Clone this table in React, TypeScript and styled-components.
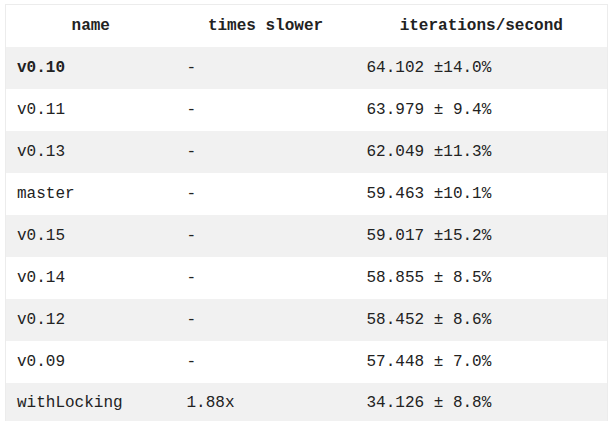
import React from "react";
import styled, { createGlobalStyle } from "styled-components";

const Global = createGlobalStyle`
  html, body { margin: 0; padding: 0; background: #fff; }
  body { font-family: "Liberation Mono", monospace; color: #222; }
`;

const Page = styled.div`
  padding: 4px 6px 0 5px;
`;

const Table = styled.table`
  border-collapse: collapse;
  width: 602px;
  border: 1px solid #ececec;
  font-family: "Liberation Mono", monospace;
  font-size: 16px;
  table-layout: fixed;
`;

const Col = styled.col<{ $w: number }>`
  width: ${(p) => p.$w}px;
`;

const Th = styled.th`
  box-sizing: border-box;
  height: 42px;
  padding: 0 11px;
  text-align: center;
  font-weight: bold;
  background: #fff;
  vertical-align: middle;
`;

const Tr = styled.tr<{ $alt: boolean }>`
  background: ${(p) => (p.$alt ? "#f1f1f1" : "#fff")};
`;

const Td = styled.td<{ $bold?: boolean }>`
  box-sizing: border-box;
  height: 42px;
  padding: 0 11px;
  text-align: left;
  vertical-align: middle;
  font-weight: ${(p) => (p.$bold ? "bold" : "normal")};
  white-space: pre;
`;

const rows = [
  ["v0.10", "-", "64.102 ±14.0%"],
  ["v0.11", "-", "63.979 ± 9.4%"],
  ["v0.13", "-", "62.049 ±11.3%"],
  ["master", "-", "59.463 ±10.1%"],
  ["v0.15", "-", "59.017 ±15.2%"],
  ["v0.14", "-", "58.855 ± 8.5%"],
  ["v0.12", "-", "58.452 ± 8.6%"],
  ["v0.09", "-", "57.448 ± 7.0%"],
  ["withLocking", "1.88x", "34.126 ± 8.8%"],
];

export default function App() {
  return (
    <Page>
      <Global />
      <Table>
        <colgroup>
          <Col $w={170} />
          <Col $w={180} />
          <Col $w={252} />
        </colgroup>
        <thead>
          <tr>
            <Th>name</Th>
            <Th>times slower</Th>
            <Th>iterations/second</Th>
          </tr>
        </thead>
        <tbody>
          {rows.map((r, i) => (
            <Tr key={r[0]} $alt={i % 2 === 0}>
              <Td $bold={i === 0}>{r[0]}</Td>
              <Td>{r[1]}</Td>
              <Td>{r[2]}</Td>
            </Tr>
          ))}
        </tbody>
      </Table>
    </Page>
  );
}
